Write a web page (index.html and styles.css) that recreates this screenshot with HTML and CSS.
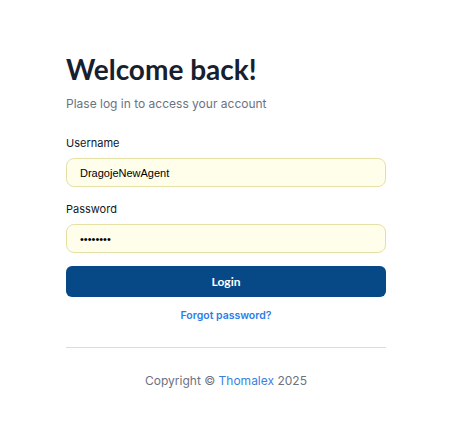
FILE: index.html
```html
<!DOCTYPE html>
<html lang="en">
<head>
<meta charset="utf-8">
<title>Login</title>
<link rel="stylesheet" href="styles.css">
</head>
<body>
<main class="page">
  <section class="card">
    <h1 class="title">Welcome back!</h1>
    <p class="subtitle">Plase log in to access your account</p>
    <form class="form">
      <label class="field">
        <span class="label">Username</span>
        <input class="input" type="text" value="DragojeNewAgent">
      </label>
      <label class="field">
        <span class="label">Password</span>
        <input class="input" type="password" value="password">
      </label>
      <button class="btn" type="button">Login</button>
      <a class="forgot" href="#">Forgot password?</a>
    </form>
    <hr class="divider">
    <p class="copyright">Copyright © <a class="brand" href="#">Thomalex</a> 2025</p>
  </section>
</main>
</body>
</html>
```

FILE: styles.css
```css
* { box-sizing: border-box; }
html, body { margin: 0; padding: 0; background: #ffffff; }
body { font-family: "Inter", "Liberation Sans", sans-serif; color: #1f2937; }
.page { padding: 52px 0 0 66px; }
.card { width: 320px; }
.title {
  margin: 0;
  font-family: "Lato", sans-serif;
  font-weight: 700;
  font-size: 28px;
  line-height: 34px;
  color: #17202e;
}
.subtitle {
  margin: 10px 0 0;
  font-size: 12px;
  line-height: 16px;
  color: #6b7280;
}
.form { display: flex; flex-direction: column; margin-top: 24px; }
.field { display: flex; flex-direction: column; gap: 8px; margin-bottom: 15px; }
.label { font-size: 11px; line-height: 14px; font-weight: 400; color: #111827; }
.input {
  height: 29px;
  border: 1px solid #e6e0a6;
  border-radius: 8px;
  background: #fefeeb;
  padding: 0 13px;
  font-family: "Liberation Sans", Arial, sans-serif;
  font-size: 11px;
  color: #000;
  outline: none;
}
.btn {
  height: 31px;
  border: 0;
  border-radius: 6px;
  background: #074887;
  color: #fff;
  font-family: "Lato", sans-serif;
  font-weight: 700;
  font-size: 12px;
  margin-top: -2px;
}
.forgot {
  align-self: center;
  margin-top: 12px;
  font-size: 10.5px;
  line-height: 14px;
  font-weight: 600;
  color: #2a7ee6;
  text-decoration: none;
}
.divider { margin: 24px 0 0; border: 0; border-top: 1px solid #dcdcdc; }
.copyright {
  margin: 25px 0 0;
  text-align: center;
  font-size: 12px;
  line-height: 16px;
  color: #6b7280;
}
.brand { color: #3a7fe0; text-decoration: none; }
```
